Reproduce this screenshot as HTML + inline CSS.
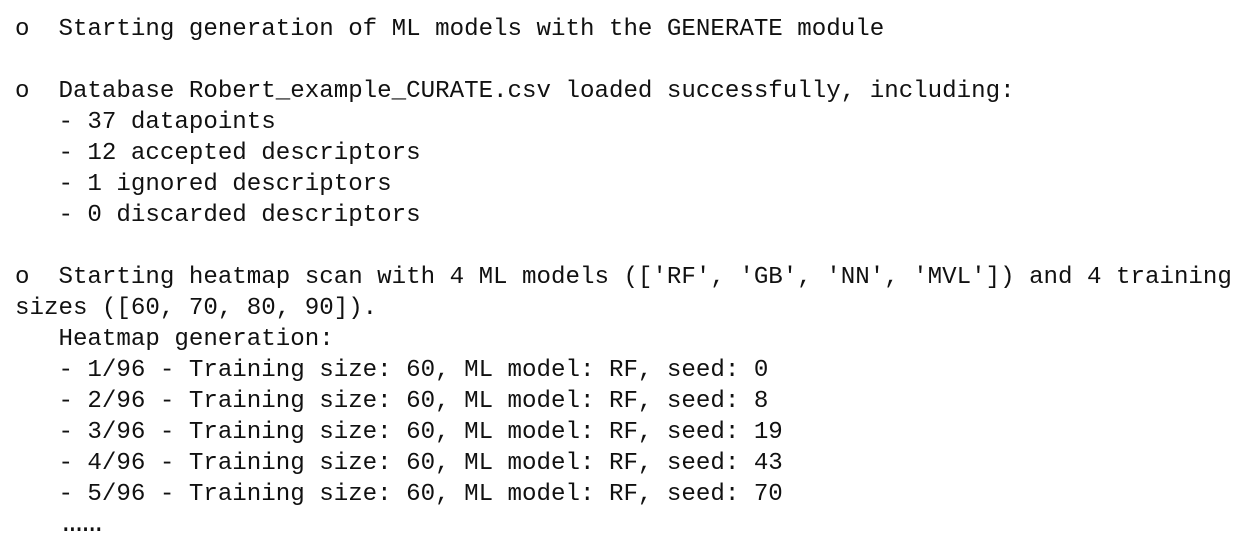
<!DOCTYPE html>
<html><head><meta charset="utf-8"><style>
html,body{margin:0;padding:0;background:#fff;width:1253px;height:549px;overflow:hidden}
pre{margin:0;position:absolute;left:15px;top:14px;font-family:"Liberation Mono",monospace;font-size:24.15px;line-height:31px;color:#111}
.d{font-size:33px;line-height:0;position:relative;left:4px}
</style></head><body><pre>o  Starting generation of ML models with the GENERATE module

o  Database Robert_example_CURATE.csv loaded successfully, including:
   - 37 datapoints
   - 12 accepted descriptors
   - 1 ignored descriptors
   - 0 discarded descriptors

o  Starting heatmap scan with 4 ML models (['RF', 'GB', 'NN', 'MVL']) and 4 training
sizes ([60, 70, 80, 90]).
   Heatmap generation:
   - 1/96 - Training size: 60, ML model: RF, seed: 0
   - 2/96 - Training size: 60, ML model: RF, seed: 8
   - 3/96 - Training size: 60, ML model: RF, seed: 19
   - 4/96 - Training size: 60, ML model: RF, seed: 43
   - 5/96 - Training size: 60, ML model: RF, seed: 70
   <span class="d">……</span></pre></body></html>
